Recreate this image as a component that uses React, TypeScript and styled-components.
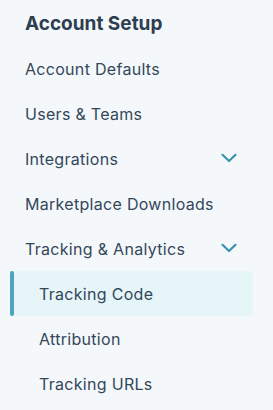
import React from "react";
import styled, { createGlobalStyle } from "styled-components";

const GlobalStyle = createGlobalStyle`
  html, body {
    margin: 0;
    padding: 0;
    background: #f5f8fa;
  }
  body {
    font-family: "Inter", "Lato", sans-serif;
    color: #33475b;
  }
`;

type Item = {
  label: string;
  expandable?: boolean;
  children?: { label: string; active?: boolean }[];
};

const items: Item[] = [
  { label: "Account Defaults" },
  { label: "Users & Teams" },
  { label: "Integrations", expandable: true },
  { label: "Marketplace Downloads" },
  {
    label: "Tracking & Analytics",
    expandable: true,
    children: [
      { label: "Tracking Code", active: true },
      { label: "Attribution" },
      { label: "Tracking URLs" },
    ],
  },
];

function Chevron() {
  return (
    <ChevronIcon width="16" height="10" viewBox="0 0 16 10" aria-hidden>
      <path
        d="M1.5 1.8 L8 8 L14.5 1.8"
        fill="none"
        stroke="#3a92ad"
        strokeWidth="2.2"
        strokeLinecap="round"
        strokeLinejoin="round"
      />
    </ChevronIcon>
  );
}

export default function App() {
  return (
    <>
      <GlobalStyle />
      <Nav>
        <Heading>Account Setup</Heading>
        <List>
          {items.map((item) => (
            <li key={item.label}>
              <Row>
                <Label>{item.label}</Label>
                {item.expandable && <Chevron />}
              </Row>
              {item.children && (
                <SubList>
                  {item.children.map((child) => (
                    <SubRow key={child.label} $active={child.active}>
                      <Label>{child.label}</Label>
                    </SubRow>
                  ))}
                </SubList>
              )}
            </li>
          ))}
        </List>
      </Nav>
    </>
  );
}

const Nav = styled.nav`
  width: 273px;
  height: 410px;
  padding-top: 1px;
  box-sizing: border-box;
  background: #f5f8fa;
  overflow: hidden;
`;

const Heading = styled.h2`
  margin: 0;
  height: 45px;
  display: flex;
  align-items: center;
  padding-left: 25px;
  font-size: 19px;
  font-weight: 700;
  letter-spacing: 0;
  color: #2d3e50;
`;

const List = styled.ul`
  list-style: none;
  margin: 0;
  padding: 0;
`;

const Row = styled.div`
  height: 45px;
  display: flex;
  align-items: center;
  justify-content: space-between;
  padding: 0 36px 0 25px;
`;

const SubList = styled.ul`
  list-style: none;
  margin: 0;
  padding: 0 20px 0 10px;
`;

const SubRow = styled.li<{ $active?: boolean }>`
  position: relative;
  height: 45px;
  display: flex;
  align-items: center;
  padding-left: 29px;
  border-radius: 4px;
  background: ${(p) => (p.$active ? "#e5f5f8" : "transparent")};

  &::before {
    content: "";
    display: ${(p) => (p.$active ? "block" : "none")};
    position: absolute;
    left: 0;
    top: 0;
    bottom: 0;
    width: 4px;
    border-radius: 3px;
    background: #4ba6bd;
  }
`;

const Label = styled.span`
  font-size: 16px;
  font-weight: 400;
  letter-spacing: 0.3px;
  color: #33475b;
`;

const ChevronIcon = styled.svg`
  display: block;
  margin-top: -1px;
`;
